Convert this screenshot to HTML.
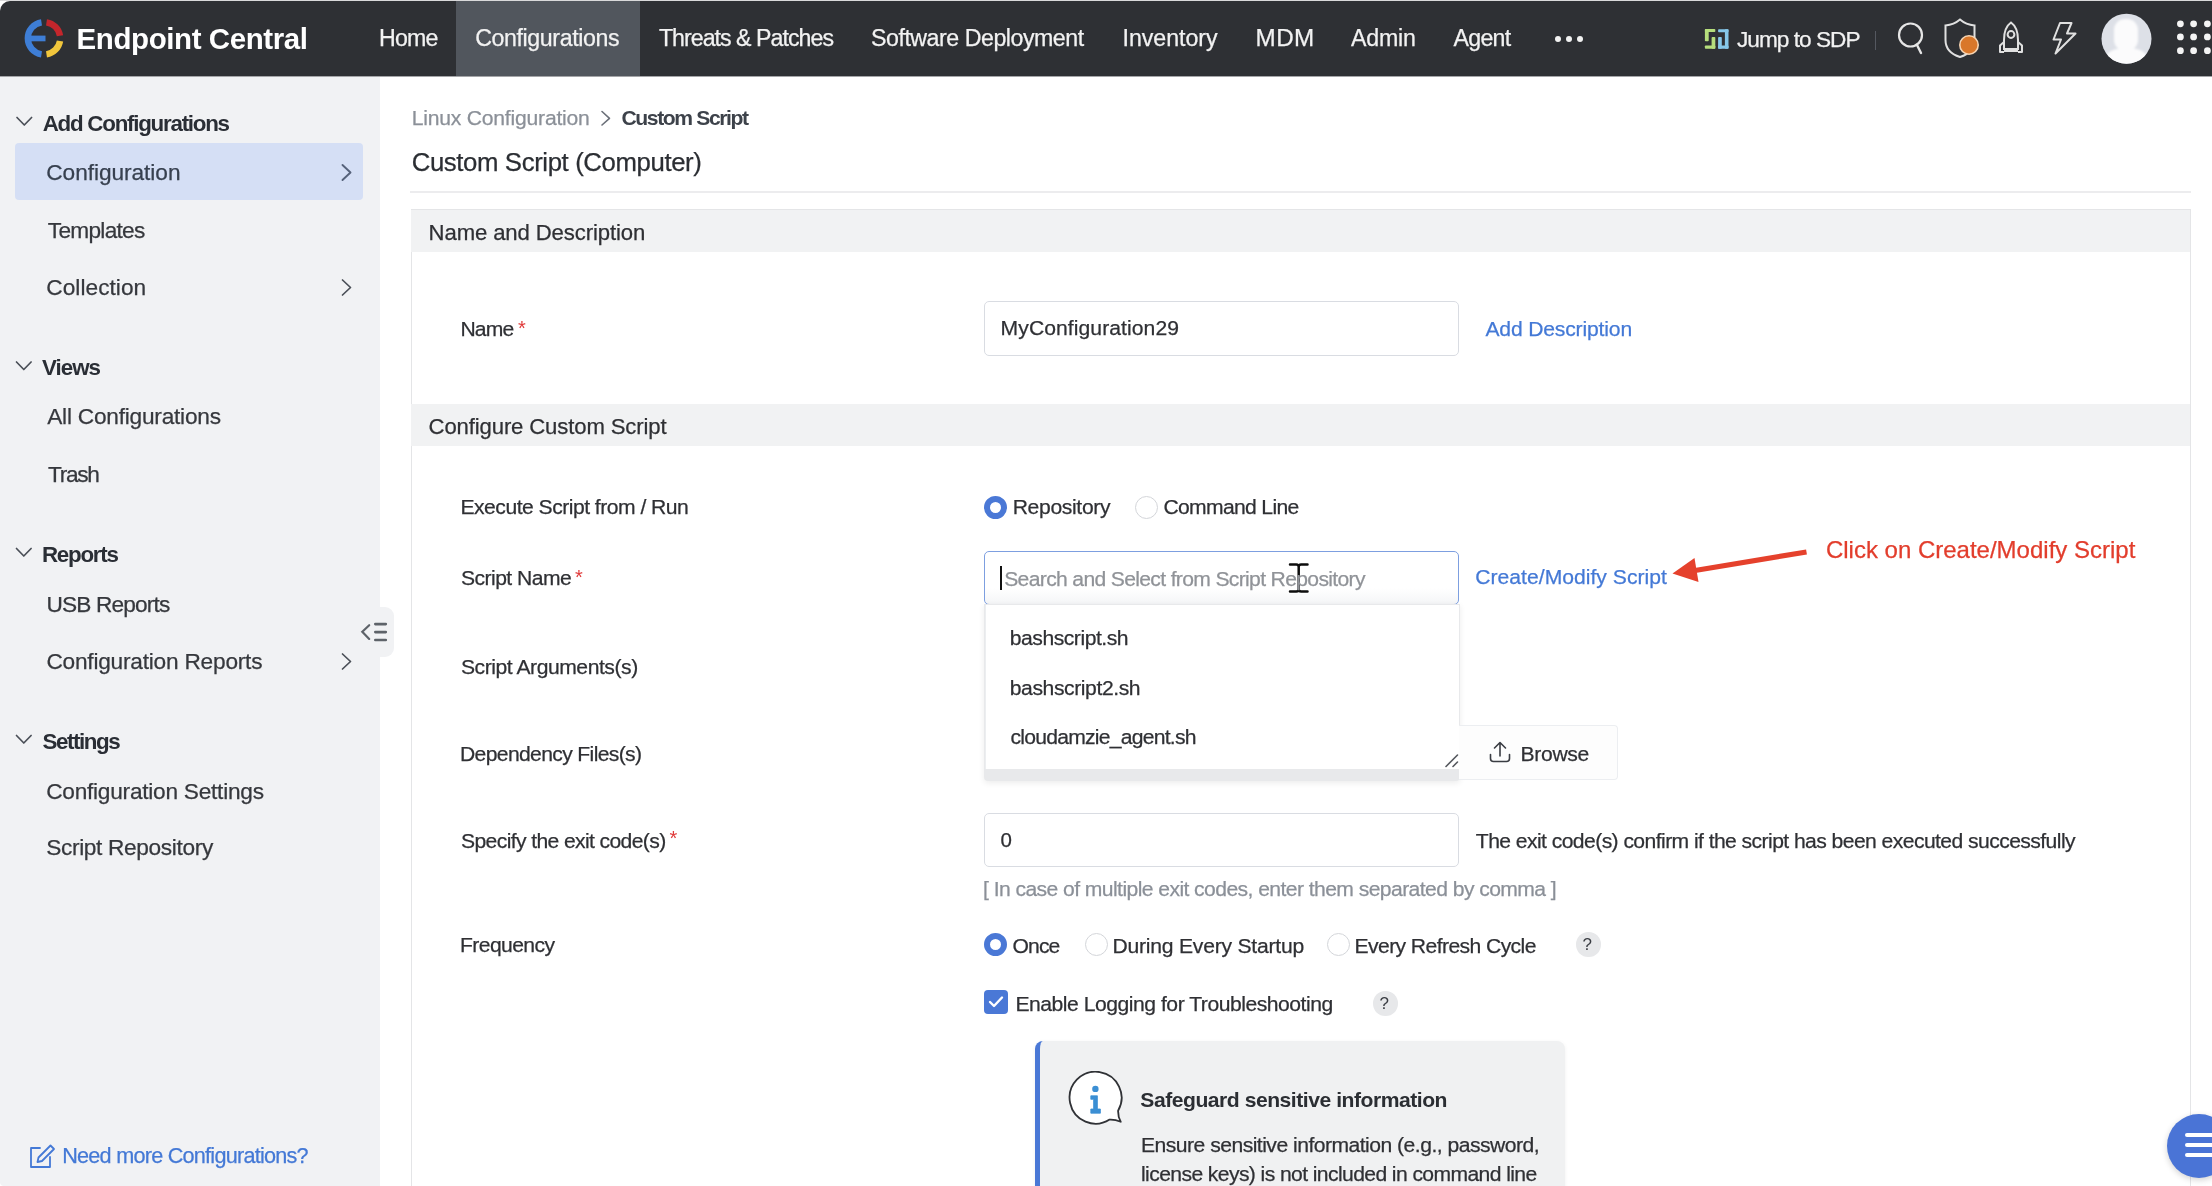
<!DOCTYPE html>
<html><head><meta charset="utf-8"><title>Endpoint Central</title>
<style>
html,body{margin:0;padding:0;width:2212px;height:1186px;overflow:hidden;background:#ffffff;font-family:"Liberation Sans",sans-serif;}
.a{position:absolute;box-sizing:border-box}
.t{position:absolute;white-space:pre;font-family:"Liberation Sans",sans-serif}
.r{-webkit-text-stroke:0.25px currentColor}
</style></head><body>
<div style="position:absolute;left:0;top:0;width:2212px;height:1186px;will-change:transform">
<!-- top strip -->
<div class="a" style="left:0;top:0;width:2212px;height:1px;background:#d9d9da"></div>
<!-- header -->
<div class="a" style="left:0;top:1px;width:2212px;height:75px;background:#2e3034;border-top-left-radius:10px"></div>
<div class="a" style="left:456px;top:1px;width:184px;height:75px;background:#51565d"></div>
<div class="a" style="left:0;top:76px;width:2212px;height:1px;background:#a4a5a8"></div>
<!-- logo -->
<svg class="a" style="left:0;top:0" width="80" height="76" viewBox="0 0 80 76">
  <path d="M41.5 22.3 A16.2 16.2 0 0 0 41.5 54.3" fill="none" stroke="#3e7ed6" stroke-width="6.4"/>
  <rect x="29" y="35.6" width="16.5" height="5.7" fill="#3e7ed6"/>
  <path d="M46.5 22.3 A16.2 16.2 0 0 1 60 35.7" fill="none" stroke="#c4262c" stroke-width="6.4"/>
  <path d="M60 40.9 A16.2 16.2 0 0 1 46.5 54.3" fill="none" stroke="#f1c63c" stroke-width="6.4"/>
</svg>
<!-- nav dots -->
<div class="a" style="left:1555px;top:35.5px;width:6px;height:6px;border-radius:50%;background:#f2f2f2"></div>
<div class="a" style="left:1566px;top:35.5px;width:6px;height:6px;border-radius:50%;background:#f2f2f2"></div>
<div class="a" style="left:1577px;top:35.5px;width:6px;height:6px;border-radius:50%;background:#f2f2f2"></div>
<!-- SDP icon -->
<svg class="a" style="left:1704px;top:28px" width="26" height="22" viewBox="0 0 26 22">
  <g fill="#b6de7c">
    <rect x="0.9" y="1" width="10.4" height="3.1" rx="0.8"/>
    <rect x="0.9" y="1" width="3.8" height="12.2" rx="0.8"/>
    <rect x="7.6" y="9.1" width="3.7" height="11.6" rx="0.8"/>
    <rect x="0.9" y="17.5" width="10.4" height="3.2" rx="0.8"/>
  </g>
  <g fill="#86c8ea">
    <rect x="14.1" y="1.3" width="10.4" height="2.9" rx="0.8"/>
    <rect x="20.9" y="1.3" width="3.6" height="19.4" rx="0.8"/>
    <rect x="14.1" y="9.1" width="3.7" height="11.6" rx="0.8"/>
    <rect x="14.1" y="17.5" width="10.4" height="3.2" rx="0.8"/>
  </g>
</svg>
<div class="a" style="left:1875px;top:31px;width:1px;height:19px;background:#555860"></div>
<!-- search -->
<svg class="a" style="left:1895px;top:20px" width="32" height="36" viewBox="0 0 32 36">
  <circle cx="15.5" cy="15" r="11.5" fill="none" stroke="#e6e6e6" stroke-width="2.2"/>
  <path d="M22 25 L26 33" stroke="#e6e6e6" stroke-width="2.4" stroke-linecap="round"/>
</svg>
<!-- shield -->
<svg class="a" style="left:1942px;top:17px" width="40" height="42" viewBox="0 0 40 42">
  <path d="M18 2.5 C14 6 9 8 3.5 8.5 V23 C3.5 32 10 37.5 18 40 C26 37.5 32.5 32 32.5 23 V8.5 C27 8 22 6 18 2.5 Z" fill="none" stroke="#e0e0e0" stroke-width="2"/>
  <circle cx="27" cy="28" r="9.2" fill="#d9772a" stroke="#f6d4b3" stroke-width="1.6"/>
</svg>
<!-- rocket -->
<svg class="a" style="left:1996px;top:20px" width="32" height="36" viewBox="0 0 32 36">
  <path d="M15 2.5 C10 6 8 13 8 20 V29 H22 V20 C22 13 20 6 15 2.5 Z" fill="none" stroke="#e0e0e0" stroke-width="2"/>
  <circle cx="15" cy="14.5" r="3.4" fill="none" stroke="#e0e0e0" stroke-width="2"/>
  <path d="M8 22 L4 25.5 V32 H8 M22 22 L26 25.5 V32 H22 M8 31 H22" fill="none" stroke="#e0e0e0" stroke-width="2" stroke-linejoin="round"/>
</svg>
<!-- lightning -->
<svg class="a" style="left:2048px;top:20px" width="32" height="36" viewBox="0 0 32 36">
  <path d="M12 3 H23.5 L19 13.5 H27.5 L7.5 33.5 L13 19.5 H5.5 Z" fill="none" stroke="#e0e0e0" stroke-width="2" stroke-linejoin="round"/>
</svg>
<!-- avatar -->
<svg class="a" style="left:2101px;top:13px" width="51" height="52" viewBox="0 0 51 52">
  <defs><clipPath id="avc"><circle cx="25.5" cy="25.7" r="25"/></clipPath>
  <filter id="avb" x="-20%" y="-20%" width="140%" height="140%"><feGaussianBlur stdDeviation="1.2"/></filter></defs>
  <circle cx="25.5" cy="25.7" r="25" fill="#dde0e7"/>
  <g clip-path="url(#avc)" filter="url(#avb)">
    <rect x="13" y="6" width="24" height="32" rx="11" fill="#fbfbfc"/>
    <path d="M2 52 C4 40 10 35 25.5 35 C41 35 47 40 49 52 Z" fill="#fbfbfc"/>
  </g>
</svg>
<!-- grid -->
<svg class="a" style="left:2176px;top:19px" width="36" height="36" viewBox="0 0 36 36">
  <g fill="#f4f4f4">
    <circle cx="4.4" cy="4.8" r="3.4"/><circle cx="17.6" cy="4.8" r="3.4"/><circle cx="31.4" cy="4.8" r="3.4"/>
    <circle cx="4.4" cy="17.9" r="3.4"/><circle cx="17.6" cy="17.9" r="3.4"/><circle cx="31.4" cy="17.9" r="3.4"/>
    <circle cx="4.4" cy="31.7" r="3.4"/><circle cx="17.6" cy="31.7" r="3.4"/><circle cx="31.4" cy="31.7" r="3.4"/>
  </g>
</svg>

<!-- sidebar -->
<div class="a" style="left:0;top:77px;width:380px;height:1109px;background:#f1f2f4;border-bottom-left-radius:4px"></div>
<div class="a" style="left:14.5px;top:143px;width:348px;height:57px;background:#d5dff5;border-radius:4px"></div>
<svg class="a" style="left:0;top:76px" width="380" height="1110" viewBox="0 76 380 1110">
  <g fill="none" stroke="#4a4f57" stroke-width="1.7" stroke-linecap="round" stroke-linejoin="round">
    <path d="M17 117.5 L24.3 125 L31.6 117.5"/>
    <path d="M16.5 362 L23.8 369.5 L31.1 362"/>
    <path d="M16.5 548.5 L23.8 556 L31.1 548.5"/>
    <path d="M16.5 735.5 L23.8 743 L31.1 735.5"/>
    <path d="M342.5 280 L350.5 287.5 L342.5 295"/>
    <path d="M342.5 654 L350.5 661.5 L342.5 669"/>
  </g>
  <path d="M342.5 165 L350.5 172.5 L342.5 180" fill="none" stroke="#56627a" stroke-width="1.9" stroke-linecap="round" stroke-linejoin="round"/>
</svg>
<!-- collapse handle -->
<div class="a" style="left:355px;top:607px;width:39px;height:50px;background:#f1f2f4;border-radius:0 9px 9px 0"></div>
<svg class="a" style="left:358px;top:618px" width="34" height="28" viewBox="0 0 34 28">
  <g fill="none" stroke="#5e6369" stroke-width="2" stroke-linecap="round">
    <path d="M11.2 7.2 L4.3 13.8 L11.2 20.9" stroke-width="2.2"/>
    <path d="M17.3 6.1 H27.8 M17.3 14.1 H27.8 M17.3 22 H27.8" stroke-width="2.6"/>
  </g>
</svg>
<!-- need more icon -->
<svg class="a" style="left:28px;top:1142px" width="28" height="28" viewBox="0 0 28 28">
  <g fill="none" stroke="#4479d6" stroke-width="1.8" stroke-linejoin="round" stroke-linecap="round">
    <path d="M12 6 H3 V25 H22 V15"/>
    <path d="M22.5 3.5 L26 7 L14 19 L9.5 20 L10.5 15.5 Z"/>
  </g>
</svg>

<!-- main card -->
<div class="a" style="left:410px;top:191px;width:1781px;height:2px;background:#ececee"></div>
<div class="a" style="left:410.5px;top:209px;width:1780px;height:990px;border:1px solid #e4e5e7;border-bottom:none"></div>
<div class="a" style="left:411px;top:210px;width:1779px;height:42px;background:#f1f2f3"></div>
<div class="a" style="left:411px;top:404px;width:1779px;height:42px;background:#f1f2f3"></div>

<!-- asterisks -->
<div class="t" style="left:518px;top:318px;font-size:20px;line-height:20px;color:#e03a3a">*</div>
<div class="t" style="left:575px;top:566.5px;font-size:20px;line-height:20px;color:#e03a3a">*</div>
<div class="t" style="left:669.5px;top:827.5px;font-size:20px;line-height:20px;color:#e03a3a">*</div>
<!-- name input -->
<div class="a" style="left:984px;top:301px;width:475px;height:55px;border:1.5px solid #d9dce2;border-radius:5px;background:#fff"></div>

<!-- radios repo -->
<div class="a" style="left:984px;top:495.5px;width:23px;height:23px;border-radius:50%;border:6px solid #4a78d6;background:#fff"></div>
<div class="a" style="left:1135px;top:495.5px;width:23px;height:23px;border-radius:50%;border:1.5px solid #d3d5d9;background:#fff"></div>

<!-- script name input (focus) -->
<div class="a" style="left:984px;top:551px;width:475px;height:54px;border:1.5px solid #7d9fe0;border-radius:5px;background:linear-gradient(#ffffff 70%,#f4f5f7)"></div>
<div class="a" style="left:1000px;top:566px;width:2px;height:24px;background:#111"></div>

<!-- dropdown -->
<div class="a" style="left:984px;top:604px;width:476px;height:177px;background:#e8e9eb;border-radius:0 0 4px 4px;box-shadow:0 2px 6px rgba(0,0,0,0.08)"></div>
<div class="a" style="left:985px;top:605px;width:474px;height:164px;background:#ffffff;border-left:1px solid #eceef0"></div>
<svg class="a" style="left:1440px;top:750px" width="22" height="20" viewBox="1440 750 22 20">
  <path d="M1446 766.5 L1457.5 755 M1453 766.5 L1457.5 762" stroke="#55585e" stroke-width="1.6" stroke-linecap="round"/>
</svg>

<!-- browse button -->
<div class="a" style="left:1459px;top:725px;width:159px;height:55px;border:1px solid #eceef1;border-left:none;border-radius:0 4px 4px 0;background:#fdfdfd"></div>
<svg class="a" style="left:1486px;top:739px" width="28" height="26" viewBox="0 0 28 26">
  <g fill="none" stroke="#3a3d43" stroke-width="1.6" stroke-linecap="round" stroke-linejoin="round">
    <path d="M14 4 V17 M8.5 9 L14 3.5 L19.5 9"/>
    <path d="M4.5 15.5 V19.5 Q4.5 22.5 7.5 22.5 H20.5 Q23.5 22.5 23.5 19.5 V15.5"/>
  </g>
</svg>

<!-- exit input -->
<div class="a" style="left:984px;top:813px;width:475px;height:54px;border:1.5px solid #d9dce2;border-radius:5px;background:#fff"></div>

<!-- frequency radios -->
<div class="a" style="left:984px;top:932.5px;width:23px;height:23px;border-radius:50%;border:6px solid #4a78d6;background:#fff"></div>
<div class="a" style="left:1084.5px;top:932.5px;width:23px;height:23px;border-radius:50%;border:1.5px solid #d3d5d9;background:#fff"></div>
<div class="a" style="left:1326.5px;top:932.5px;width:23px;height:23px;border-radius:50%;border:1.5px solid #d3d5d9;background:#fff"></div>
<div class="a" style="left:1576px;top:932px;width:24.5px;height:24.5px;border-radius:50%;background:#e7e8ea"></div>
<div class="t" style="left:1582.5px;top:935.5px;font-size:17px;line-height:17px;color:#3a3d43">?</div>

<!-- checkbox -->
<div class="a" style="left:983.5px;top:990px;width:24px;height:23.5px;border-radius:4px;background:#4a78d6"></div>
<svg class="a" style="left:983.5px;top:990px" width="24" height="24" viewBox="0 0 24 24">
  <path d="M6 12 L10 16 L18 7.5" fill="none" stroke="#fff" stroke-width="2.4" stroke-linecap="round" stroke-linejoin="round"/>
</svg>
<div class="a" style="left:1373px;top:991px;width:24.5px;height:24.5px;border-radius:50%;background:#e7e8ea"></div>
<div class="t" style="left:1379.5px;top:994.5px;font-size:17px;line-height:17px;color:#3a3d43">?</div>

<!-- info box -->
<div class="a" style="left:1035px;top:1041px;width:530px;height:170px;background:#f0f1f2;border-left:5px solid #4a78d6;border-radius:8px;box-shadow:0 1px 4px rgba(0,0,0,0.06)"></div>
<svg class="a" style="left:1065.2px;top:1070.6px" width="60" height="60" viewBox="0 0 60 60">
  <path d="M44.6 48.6 A26 26 0 1 1 53.1 39.7 Q53 46 55.7 50.8 Q50 48.3 44.6 48.6 Z" fill="#ffffff" stroke="#303236" stroke-width="1.8" stroke-linejoin="round"/>
  <circle cx="30.4" cy="17.9" r="3.2" fill="#3b8fd4"/>
  <path d="M25.8 24.8 H32.4 V38 H35.4 V42.2 H25.8 V38 H28.6 V28.3 H25.8 Z" fill="#3b8fd4" stroke="#3b8fd4" stroke-width="0.8" stroke-linejoin="round"/>
</svg>

<!-- arrow -->
<svg class="a" style="left:1660px;top:540px" width="160" height="50" viewBox="1660 540 160 50">
  <path d="M1806.5 552 L1695 570.5" stroke="#e5412c" stroke-width="5.2" stroke-linecap="butt"/>
  <path d="M1672.5 573.4 L1694.5 558 L1698.5 582 Z" fill="#e5412c"/>
</svg>

<!-- I-beam cursor -->
<svg class="a" style="left:1287px;top:560px" width="24" height="36" viewBox="0 0 24 36">
  <path d="M3 4.5 H9.3 Q11.7 4.5 11.7 6.8 V29.2 Q11.7 31.5 9.3 31.5 H3 M20.5 4.5 H14.1 Q11.7 4.5 11.7 6.8 M11.7 29.2 Q11.7 31.5 14.1 31.5 H20.5" fill="none" stroke="#ffffff" stroke-width="4.6" stroke-linecap="round"/>
  <path d="M3 4.5 H9.3 Q11.7 4.5 11.7 6.8 V29.2 Q11.7 31.5 9.3 31.5 H3 M20.5 4.5 H14.1 Q11.7 4.5 11.7 6.8 M11.7 29.2 Q11.7 31.5 14.1 31.5 H20.5" fill="none" stroke="#0d0d0d" stroke-width="2.5" stroke-linecap="round"/>
</svg>
<!-- FAB -->
<div class="a" style="left:2167px;top:1114px;width:64px;height:64px;border-radius:50%;background:#4a74d6;box-shadow:0 2px 6px rgba(0,0,0,0.18)"></div>
<div class="a" style="left:2185px;top:1133px;width:30px;height:4px;border-radius:2px;background:#fff"></div>
<div class="a" style="left:2185px;top:1143px;width:30px;height:4px;border-radius:2px;background:#fff"></div>
<div class="a" style="left:2185px;top:1153px;width:30px;height:4px;border-radius:2px;background:#fff"></div>
<!-- breadcrumb chevron -->
<svg class="a" style="left:598px;top:108px" width="16" height="20" viewBox="598 108 16 20">
  <path d="M602 111.5 L609.5 118.3 L602 125" fill="none" stroke="#6b7079" stroke-width="1.6" stroke-linecap="round" stroke-linejoin="round"/>
</svg>

<div class="t" style="left:76.6px;top:24.1px;font-size:29.46px;line-height:29.46px;color:#ffffff;font-weight:700;letter-spacing:-0.391px">Endpoint Central</div>
<div class="t r" style="left:379.0px;top:27.0px;font-size:23.18px;line-height:23.18px;color:#f2f2f2;font-weight:400;letter-spacing:-0.808px">Home</div>
<div class="t r" style="left:475.2px;top:27.0px;font-size:23.18px;line-height:23.18px;color:#f2f2f2;font-weight:400;letter-spacing:-0.387px">Configurations</div>
<div class="t r" style="left:658.9px;top:27.0px;font-size:23.18px;line-height:23.18px;color:#f2f2f2;font-weight:400;letter-spacing:-0.970px">Threats &amp; Patches</div>
<div class="t r" style="left:871.0px;top:27.0px;font-size:23.18px;line-height:23.18px;color:#f2f2f2;font-weight:400;letter-spacing:-0.466px">Software Deployment</div>
<div class="t r" style="left:1122.5px;top:27.0px;font-size:23.18px;line-height:23.18px;color:#f2f2f2;font-weight:400;letter-spacing:-0.028px">Inventory</div>
<div class="t r" style="left:1255.6px;top:26.0px;font-size:24.21px;line-height:24.21px;color:#f2f2f2;font-weight:400;letter-spacing:0.380px">MDM</div>
<div class="t r" style="left:1351.0px;top:27.0px;font-size:23.18px;line-height:23.18px;color:#f2f2f2;font-weight:400;letter-spacing:-0.198px">Admin</div>
<div class="t r" style="left:1453.4px;top:27.0px;font-size:23.18px;line-height:23.18px;color:#f2f2f2;font-weight:400;letter-spacing:-0.679px">Agent</div>
<div class="t r" style="left:1737.0px;top:28.3px;font-size:22.66px;line-height:22.66px;color:#f2f2f2;font-weight:400;letter-spacing:-0.986px">Jump to SDP</div>
<div class="t" style="left:42.7px;top:112.6px;font-size:22.35px;line-height:22.35px;color:#2a2e35;font-weight:700;letter-spacing:-1.246px">Add Configurations</div>
<div class="t r" style="left:46.3px;top:161.3px;font-size:22.66px;line-height:22.66px;color:#37404f;font-weight:400;letter-spacing:-0.047px">Configuration</div>
<div class="t r" style="left:47.8px;top:218.8px;font-size:22.66px;line-height:22.66px;color:#36383d;font-weight:400;letter-spacing:-0.716px">Templates</div>
<div class="t r" style="left:46.3px;top:276.3px;font-size:22.66px;line-height:22.66px;color:#36383d;font-weight:400;letter-spacing:0.046px">Collection</div>
<div class="t" style="left:42.1px;top:357.2px;font-size:22.35px;line-height:22.35px;color:#2a2e35;font-weight:700;letter-spacing:-1.028px">Views</div>
<div class="t r" style="left:47.2px;top:405.2px;font-size:22.66px;line-height:22.66px;color:#36383d;font-weight:400;letter-spacing:-0.220px">All Configurations</div>
<div class="t r" style="left:48.1px;top:462.7px;font-size:22.66px;line-height:22.66px;color:#36383d;font-weight:400;letter-spacing:-1.318px">Trash</div>
<div class="t" style="left:42.0px;top:544.2px;font-size:22.35px;line-height:22.35px;color:#2a2e35;font-weight:700;letter-spacing:-1.266px">Reports</div>
<div class="t r" style="left:46.4px;top:593.3px;font-size:22.66px;line-height:22.66px;color:#36383d;font-weight:400;letter-spacing:-0.828px">USB Reports</div>
<div class="t r" style="left:46.4px;top:649.9px;font-size:22.66px;line-height:22.66px;color:#36383d;font-weight:400;letter-spacing:-0.213px">Configuration Reports</div>
<div class="t" style="left:42.6px;top:730.5px;font-size:22.35px;line-height:22.35px;color:#2a2e35;font-weight:700;letter-spacing:-1.431px">Settings</div>
<div class="t r" style="left:46.2px;top:780.2px;font-size:22.66px;line-height:22.66px;color:#36383d;font-weight:400;letter-spacing:-0.243px">Configuration Settings</div>
<div class="t r" style="left:46.2px;top:836.0px;font-size:22.66px;line-height:22.66px;color:#36383d;font-weight:400;letter-spacing:-0.342px">Script Repository</div>
<div class="t r" style="left:62.2px;top:1145.3px;font-size:21.63px;line-height:21.63px;color:#4479d6;font-weight:400;letter-spacing:-0.751px">Need more Configurations?</div>
<div class="t r" style="left:411.7px;top:106.6px;font-size:21.12px;line-height:21.12px;color:#8b9098;font-weight:400;letter-spacing:-0.209px">Linux Configuration</div>
<div class="t" style="left:621.4px;top:106.6px;font-size:21.12px;line-height:21.12px;color:#3d424a;font-weight:700;letter-spacing:-1.378px">Custom Script</div>
<div class="t r" style="left:411.7px;top:149.7px;font-size:25.75px;line-height:25.75px;color:#2b2e33;font-weight:400;letter-spacing:-0.386px">Custom Script (Computer)</div>
<div class="t r" style="left:428.6px;top:222.1px;font-size:22.14px;line-height:22.14px;color:#2f3034;font-weight:400;letter-spacing:-0.121px">Name and Description</div>
<div class="t r" style="left:428.6px;top:415.6px;font-size:22.14px;line-height:22.14px;color:#2f3034;font-weight:400;letter-spacing:-0.139px">Configure Custom Script</div>
<div class="t r" style="left:460.4px;top:318.4px;font-size:21.12px;line-height:21.12px;color:#2f3034;font-weight:400;letter-spacing:-0.790px">Name</div>
<div class="t r" style="left:1000.6px;top:316.9px;font-size:21.12px;line-height:21.12px;color:#2f3034;font-weight:400;letter-spacing:0.072px">MyConfiguration29</div>
<div class="t r" style="left:1485.4px;top:317.8px;font-size:21.12px;line-height:21.12px;color:#4479d6;font-weight:400;letter-spacing:-0.162px">Add Description</div>
<div class="t r" style="left:460.5px;top:495.5px;font-size:21.12px;line-height:21.12px;color:#2f3034;font-weight:400;letter-spacing:-0.507px">Execute Script from / Run</div>
<div class="t r" style="left:1012.7px;top:495.5px;font-size:21.12px;line-height:21.12px;color:#2f3034;font-weight:400;letter-spacing:-0.338px">Repository</div>
<div class="t r" style="left:1163.4px;top:495.5px;font-size:21.12px;line-height:21.12px;color:#2f3034;font-weight:400;letter-spacing:-0.664px">Command Line</div>
<div class="t r" style="left:460.9px;top:567.1px;font-size:21.12px;line-height:21.12px;color:#2f3034;font-weight:400;letter-spacing:-0.529px">Script Name</div>
<div class="t r" style="left:1004.2px;top:567.7px;font-size:21.12px;line-height:21.12px;color:#909398;font-weight:400;letter-spacing:-0.662px">Search and Select from Script Repository</div>
<div class="t r" style="left:1475.3px;top:566.3px;font-size:21.12px;line-height:21.12px;color:#4479d6;font-weight:400;letter-spacing:0.018px">Create/Modify Script</div>
<div class="t r" style="left:1825.9px;top:537.7px;font-size:24px;line-height:24px;color:#e23d2c;font-weight:400;letter-spacing:0.000px">Click on Create/Modify Script</div>
<div class="t r" style="left:1009.8px;top:627.2px;font-size:21.12px;line-height:21.12px;color:#2f3034;font-weight:400;letter-spacing:-0.469px">bashscript.sh</div>
<div class="t r" style="left:1009.8px;top:676.5px;font-size:21.12px;line-height:21.12px;color:#2f3034;font-weight:400;letter-spacing:-0.413px">bashscript2.sh</div>
<div class="t r" style="left:1010.4px;top:726.1px;font-size:21.12px;line-height:21.12px;color:#2f3034;font-weight:400;letter-spacing:-0.742px">cloudamzie_agent.sh</div>
<div class="t r" style="left:461.0px;top:655.7px;font-size:21.12px;line-height:21.12px;color:#2f3034;font-weight:400;letter-spacing:-0.455px">Script Arguments(s)</div>
<div class="t r" style="left:460.0px;top:742.6px;font-size:21.12px;line-height:21.12px;color:#2f3034;font-weight:400;letter-spacing:-0.642px">Dependency Files(s)</div>
<div class="t r" style="left:1520.6px;top:742.5px;font-size:21.12px;line-height:21.12px;color:#2f3034;font-weight:400;letter-spacing:-0.330px">Browse</div>
<div class="t r" style="left:461.0px;top:829.7px;font-size:21.12px;line-height:21.12px;color:#2f3034;font-weight:400;letter-spacing:-0.616px">Specify the exit code(s)</div>
<div class="t r" style="left:1000.4px;top:829.6px;font-size:20.5px;line-height:20.5px;color:#2f3034;font-weight:400;letter-spacing:0.000px">0</div>
<div class="t r" style="left:1475.8px;top:829.5px;font-size:21.12px;line-height:21.12px;color:#2f3034;font-weight:400;letter-spacing:-0.566px">The exit code(s) confirm if the script has been executed successfully</div>
<div class="t r" style="left:983.1px;top:878.3px;font-size:21.12px;line-height:21.12px;color:#8b9098;font-weight:400;letter-spacing:-0.571px">[ In case of multiple exit codes, enter them separated by comma ]</div>
<div class="t r" style="left:460.0px;top:934.4px;font-size:21.12px;line-height:21.12px;color:#2f3034;font-weight:400;letter-spacing:-0.585px">Frequency</div>
<div class="t r" style="left:1012.5px;top:934.6px;font-size:21.12px;line-height:21.12px;color:#2f3034;font-weight:400;letter-spacing:-0.871px">Once</div>
<div class="t r" style="left:1112.4px;top:934.6px;font-size:21.12px;line-height:21.12px;color:#2f3034;font-weight:400;letter-spacing:-0.215px">During Every Startup</div>
<div class="t r" style="left:1354.5px;top:934.6px;font-size:21.12px;line-height:21.12px;color:#2f3034;font-weight:400;letter-spacing:-0.580px">Every Refresh Cycle</div>
<div class="t r" style="left:1015.4px;top:993.4px;font-size:21.12px;line-height:21.12px;color:#2f3034;font-weight:400;letter-spacing:-0.468px">Enable Logging for Troubleshooting</div>
<div class="t" style="left:1140.3px;top:1088.5px;font-size:21.12px;line-height:21.12px;color:#2b2e33;font-weight:700;letter-spacing:-0.474px">Safeguard sensitive information</div>
<div class="t r" style="left:1141.0px;top:1134.0px;font-size:21.12px;line-height:21.12px;color:#2f3034;font-weight:400;letter-spacing:-0.515px">Ensure sensitive information (e.g., password,</div>
<div class="t r" style="left:1141.0px;top:1163.4px;font-size:21.12px;line-height:21.12px;color:#2f3034;font-weight:400;letter-spacing:-0.594px">license keys) is not included in command line</div>
</div>
</body></html>
